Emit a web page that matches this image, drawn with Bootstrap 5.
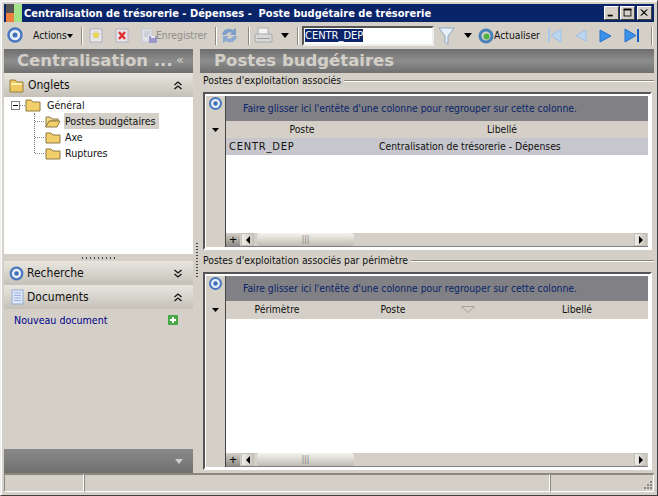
<!DOCTYPE html>
<html lang="fr"><head><meta charset="utf-8"><title>Centralisation</title>
<link href="https://cdn.jsdelivr.net/npm/bootstrap@5.3.0/dist/css/bootstrap.min.css" rel="stylesheet">
<style>
html,body{margin:0;width:658px;height:496px;overflow:hidden;background:#d4d0c8}
body,.ui{font:10.3px/13px "DejaVu Sans Condensed","DejaVu Sans",sans-serif;color:#111}
.win{width:658px;height:496px;background:#d4d0c8;border:1px solid;border-color:#eee #404040 #404040 #eee;box-shadow:inset 1px 1px 0 #fff;box-sizing:border-box;padding:3px}
.titlebar{height:18px;background:#0a246a;color:#fff;font-weight:700;font-size:11px;white-space:pre}
.appicon{width:20px;height:18px;flex:none}
.capbtn{width:15px;height:14px;background:#d4d0c8;border:1px solid;border-color:#fff #404040 #404040 #fff;margin-left:1px;flex:none;display:block}
.capx{margin-left:2px;margin-right:2px}
.toolbar{height:27px;white-space:nowrap}
.toolbar>*{flex:none}
.tsep{width:1px;height:18px;background:#8b887f;box-shadow:1px 0 0 #fff;flex:none}
.textbox{width:132px;height:20px;background:#fff;border:2px solid;border-color:#555 #eee #eee #555;padding:1px 0 0 1px;font-size:11px}
.sel{background:#0a246a;color:#fff}
.m0{margin-left:0}.mn1{margin-left:-1px}.m2{margin-left:2px}.m3{margin-left:3px}.m4{margin-left:4px}.m5{margin-left:5px}.m6{margin-left:6px}.m7{margin-left:7px}.m8{margin-left:8px}.m9{margin-left:9px}.m10{margin-left:10px}.m11{margin-left:11px}.m12{margin-left:12px}
.w-act{width:34px}.w-save{width:54px;color:#8f8c85}.w-upd{width:47px}
.mainrow{height:424px}
.leftp{width:189px;flex:none}
.rightp{width:454px;flex:none}
.hdr{height:24px;background:linear-gradient(#6f6f6f,#8d8d8d 50%,#6f6f6f);color:#d4d0c8;font:700 16.5px/24px "DejaVu Sans",sans-serif;white-space:nowrap;overflow:hidden}
.ht1{padding-left:13px}
.ht2{padding-left:14px}
.collapse-mark{font:400 13px/22px "DejaVu Sans",sans-serif;padding-right:9px}
.sect{height:24px;background:linear-gradient(#e9e6df,#c5c1b9);font-size:12px}
.sect span{padding-top:1px}
.chev{margin-right:11px;flex:none}
.tree{height:157px;background:#fff;padding:0 0 0 7px;font-size:10.6px}
.treerow{height:16px;white-space:nowrap}
.treerow svg{flex:none}
.treebr{margin-left:23px;border-left:1px dotted #777;height:40px}
.subhi{background:#d4d0c8;padding:0 3px 0 1px;margin-left:3px;line-height:16px}
.tl2{margin-left:4px}
.gripbar{height:7px}
.griplbl{width:34px;height:2px;background:repeating-linear-gradient(90deg,#444 0 1px,transparent 1px 4px)}
.docarea{padding:5px 0 0 10px}
.linkdoc{color:#00008b;font-size:10.6px}
.addic{margin:1px 15px 0 0;flex:none}
.footg{height:24px;background:linear-gradient(#8a8a8a,#6f6f6f)}
.footg .chev{margin-right:10px}
.grpwrap{width:7px;flex:none}
.vgrip{width:2px;height:35px;margin-top:194px;background:repeating-linear-gradient(#444 0 1px,transparent 1px 3px);flex:none}
.lbl{height:14px;margin-bottom:5px;padding-left:3px;white-space:nowrap}
.l2{margin-top:3px}
.lbl-line{height:1px;background:#8b887f;box-shadow:0 1px 0 #fff;margin-left:3px}
.gridbox{border:2px solid;border-color:#555 #fff #fff #555;margin:0 2px 0 3px;background:#fff;box-sizing:border-box}
.g1{height:158px}
.g2{height:198px}
.gridin{border:solid #fff;border-width:2px 2px 1px 1px;background:#fff}
.rail{width:20px;background:#d4d0c8;border-right:1px solid #444;flex:none}
.r1{margin-top:0}
.r2{margin-top:17px}
.gcol{min-width:0}
.groupbar{height:25px;background:#808085;color:#0a246a;padding:6px 0 0 17px;white-space:nowrap;flex:none}
.ghead{height:17px;background:#d4d0c8;white-space:nowrap;overflow:hidden;padding-top:2px;flex:none}
.gh2{height:18px}
.cell{text-align:center;flex:none}
.grow1{height:17px;background:#c7c6cc;padding-top:2px;white-space:nowrap;flex:none}
.c1{width:152px}.c2{width:248px}
.tc{padding-left:3px}.tc2{padding-left:1px}
.cdep{font-size:11px;letter-spacing:.8px}
.c21{width:102px}.c22{width:130px}.c23{width:204px}
.tri{width:17px;padding:3px 0 0 3px;flex:none;box-sizing:border-box}
.tri svg{display:block}
.gwhite{background:#fff;flex:1 1 auto}
.sbar{height:14px;background:#d4d0c8;border-bottom:1px solid #808080;flex:none;overflow:hidden}
.plusb{width:14px;background:linear-gradient(#d4d0c8,#8f8d87);font:400 13px/13px "Liberation Sans",sans-serif;text-align:center;color:#000;flex:none}
.arrowb{width:13px;background:linear-gradient(90deg,#f0eee9,#c8c5bd);border:1px solid #c0bdb5;flex:none;margin-left:1px;box-sizing:border-box}
.arrowb svg{display:block;margin:2px auto 0}
.arrowr{margin-left:0;margin-right:1px}
.thumb{width:97px;margin-left:3px;border-radius:3px;background:linear-gradient(#f4f3ef,#d8d5ce 55%,#bdbab2);flex:none;text-align:center;font-size:8px;line-height:13px;color:#777}
.status{height:19px;border-top:1px solid #8b887f;box-shadow:inset 0 1px 0 #fff}
.stcell{border:1px solid;border-color:#8b887f #fff #fff #8b887f;height:18px;margin-top:0}
.st1{width:80px}.st3{width:104px}
</style></head>
<body>
<div class="win ui d-flex flex-column">
 <div class="titlebar d-flex align-items-center">
  <svg class="appicon" viewBox="0 0 20 18"><rect width="20" height="18" fill="#0a246a"/><rect x="2" width="8" height="9" fill="#555"/><rect x="2" y="9" width="8" height="9" fill="#f08040"/><rect x="10" width="8" height="18" fill="#a4e488"/></svg>
  <span class="flex-grow-1">Centralisation de trésorerie - Dépenses -  Poste budgétaire de trésorerie</span>
  <svg class="capbtn" viewBox="0 0 15 14"><rect x="3" y="9" width="6" height="2" fill="#000"/></svg>
  <svg class="capbtn" viewBox="0 0 15 14"><rect x="3.500" y="2.500" width="8" height="8" fill="none" stroke="#000"/><rect x="3" y="2" width="9" height="2" fill="#000"/></svg>
  <svg class="capbtn capx" viewBox="0 0 15 14"><path d="M3 3l7 7M4 3l7 7M10 3l-7 7M11 3l-7 7" stroke="#000"/></svg>
 </div>
 <div class="toolbar d-flex align-items-center">
  <svg class="m3" width="17" height="17" viewBox="0 0 17 17"><circle cx="8" cy="8" r="6.500" fill="#e8eef8" stroke="#4a78c0" stroke-width="2.500"/><circle cx="8" cy="8" r="2.500" fill="#3f6fb8"/></svg>
  <span class="m9 w-act">Actions</span><svg width="6" height="4" viewBox="0 0 6 4"><path d="M0 0h6L3 4z"/></svg>
  <span class="tsep m8"></span>
  <svg class="m7" width="14" height="15" viewBox="0 0 14 15"><rect x="1" y="1" width="12" height="13" fill="#e8e6e8" stroke="#b0b0c0"/><path d="M7 3l1.200 2.400 2.600.3-1.900 1.800.5 2.600L7 8.900l-2.400 1.200.5-2.600-1.900-1.800 2.600-.3z" fill="#f2dc40" stroke="#c8b860" stroke-width=".5"/></svg>
  <svg class="m12" width="14" height="15" viewBox="0 0 14 15"><rect x="1" y="1" width="12" height="13" fill="#e8e6e8" stroke="#b0b0c0"/><path d="M4 4l6 7M10 4l-6 7" stroke="#e03030" stroke-width="2.400"/></svg>
  <svg class="m12" width="16" height="16" viewBox="0 0 16 16"><rect x="1" y="1" width="10" height="13" fill="#dfe2e8" stroke="#c4c8d0"/><path d="M3 4h6M3 6h6M3 8h4" stroke="#b8bcc8"/><rect x="8" y="8" width="8" height="7" fill="#9a98c8"/><rect x="10" y="8" width="4" height="2" fill="#e8e8f0"/></svg>
  <span class="mn1 w-save">Enregistrer</span>
  <span class="tsep m5"></span>
  <svg class="m5" width="17" height="17" viewBox="0 0 17 17"><path d="M1 8a7 7 0 0 1 11-5l3-2v7H9l2-2a4 4 0 0 0-6 2z" fill="#7f9fca"/><path d="M16 9a7 7 0 0 1-11 5l-3 2V9h6l-2 2a4 4 0 0 0 6-2z" fill="#8eaad0"/></svg>
  <span class="tsep m10"></span>
  <svg class="m5" width="19" height="17" viewBox="0 0 19 17"><rect x="4" y="1" width="10" height="7" fill="#f2f2f2" stroke="#b0b0b0"/><rect x="1" y="7" width="17" height="8" rx="1" fill="#d8d8d8" stroke="#a8a8a8"/><rect x="3" y="11" width="13" height="1" fill="#999"/></svg>
  <svg class="m8" width="8" height="5" viewBox="0 0 8 5"><path d="M0 0h8L4 5z"/></svg>
  <span class="tsep m8"></span>
  <div class="textbox m4"><span class="sel">CENTR_DEP</span></div>
  <svg class="m4" width="17" height="20" viewBox="0 0 17 20"><path d="M1 2h15L10 10v8l-3-2v-6z" fill="#e8f0f8" stroke="#8fa8c4"/></svg>
  <svg class="m9" width="8" height="5" viewBox="0 0 8 5"><path d="M0 0h8L4 5z"/></svg>
  <svg class="m6" width="16" height="16" viewBox="0 0 16 16"><circle cx="8" cy="8" r="6" fill="none" stroke="#4a80b8" stroke-width="3"/><circle cx="8.500" cy="8.500" r="3" fill="#50b040"/></svg>
  <span class="w-upd">Actualiser</span>
  <svg class="m6" width="16" height="15" viewBox="0 0 16 15"><rect x="1" y="1" width="2" height="13" fill="#a8c8ec"/><path d="M14 1v13L4 7.500z" fill="#bcd6f2" stroke="#a0c0e4"/></svg>
  <svg class="m11" width="13" height="13" viewBox="0 0 13 13"><path d="M12 1v11L2 6.500z" fill="#bcd6f2" stroke="#a0c0e4"/></svg>
  <svg class="m12" width="13" height="14" viewBox="0 0 13 14"><path d="M1 1v12L12 7z" fill="#3a92ec" stroke="#2a70c8"/></svg>
  <svg class="m12" width="16" height="15" viewBox="0 0 16 15"><path d="M1 1v13L12 7.500z" fill="#3a92ec" stroke="#2a70c8"/><rect x="13" y="1" width="2" height="13" fill="#1a60c0"/></svg>
  <span class="tsep m11"></span>
 </div>
 <div class="mainrow d-flex">
  <div class="leftp d-flex flex-column">
   <div class="hdr d-flex justify-content-between"><span class="ht1">Centralisation ...</span><span class="collapse-mark">«</span></div>
   <div class="sect d-flex align-items-center"><svg class="m5" width="15" height="15" viewBox="0 0 15 15"><path d="M1 2h5l2 2h6v10H1z" fill="#f0c860" stroke="#9a8040"/><rect x="2" y="5" width="11" height="2" fill="#fff0b0"/></svg><span class="m4 flex-grow-1">Onglets</span><svg class="chev" width="8" height="9" viewBox="0 0 8 9"><path d="M.5 4L4 1l3.500 3M.5 8L4 5l3.500 3" fill="none" stroke="#111" stroke-width="1.300"/></svg></div>
   <div class="tree">
    <div class="treerow d-flex align-items-center">
     <svg width="9" height="9" viewBox="0 0 9 9"><rect x=".5" y=".5" width="8" height="8" fill="#fff" stroke="#808080"/><path d="M2 4.500h5" stroke="#000"/></svg>
     <svg width="21" height="13" viewBox="0 0 21 13"><path d="M0 6.500h6" stroke="#888" stroke-dasharray="1 1"/><path d="M6 1h5l2 2h7v9H6z" fill="#f2cf6a" stroke="#8d7a40"/></svg>
     <span class="m6">Général</span>
    </div>
    <div class="treebr">
     <div class="treerow d-flex align-items-center"><svg width="10" height="1" viewBox="0 0 10 1"><path d="M0 .5h10" stroke="#888" stroke-dasharray="1 1"/></svg><svg width="16" height="13" viewBox="0 0 16 13"><path d="M1 2h4l2 2h6v2H5l-4 6z" fill="#f0d890" stroke="#8d7a40"/><path d="M4 6h11l-3 6H1z" fill="#f2cf6a" stroke="#8d7a40"/></svg><span class="subhi">Postes budgétaires</span></div>
     <div class="treerow d-flex align-items-center"><svg width="10" height="1" viewBox="0 0 10 1"><path d="M0 .5h10" stroke="#888" stroke-dasharray="1 1"/></svg><svg width="16" height="13" viewBox="0 0 16 13"><path d="M1 2h5l2 2h7v8H1z" fill="#f2cf6a" stroke="#8d7a40"/></svg><span class="tl2">Axe</span></div>
     <div class="treerow d-flex align-items-center"><svg width="10" height="1" viewBox="0 0 10 1"><path d="M0 .5h10" stroke="#888" stroke-dasharray="1 1"/></svg><svg width="16" height="13" viewBox="0 0 16 13"><path d="M1 2h5l2 2h7v8H1z" fill="#f2cf6a" stroke="#8d7a40"/></svg><span class="tl2">Ruptures</span></div>
    </div>
   </div>
   <div class="gripbar d-flex justify-content-center align-items-center"><span class="griplbl"></span></div>
   <div class="sect d-flex align-items-center"><svg class="m5" width="15" height="15" viewBox="0 0 15 15"><circle cx="7.500" cy="7.500" r="5.800" fill="#e8eef8" stroke="#4a78c0" stroke-width="2.200"/><circle cx="7.500" cy="7.500" r="2.300" fill="#3f6fb8"/></svg><span class="m3 flex-grow-1">Recherche</span><svg class="chev" width="8" height="9" viewBox="0 0 8 9"><path d="M.5 1L4 4l3.500-3M.5 5L4 8l3.500-3" fill="none" stroke="#111" stroke-width="1.300"/></svg></div>
   <div class="sect d-flex align-items-center"><svg class="m6" width="15" height="16" viewBox="0 0 15 16"><rect x="2" y="1" width="11" height="14" fill="#dfe8f8" stroke="#98acd0"/><path d="M4 4h7M4 6.500h7M4 9h7M4 11.500h7" stroke="#9ab0dc"/></svg><span class="m2 flex-grow-1">Documents</span><svg class="chev" width="8" height="9" viewBox="0 0 8 9"><path d="M.5 4L4 1l3.500 3M.5 8L4 5l3.500 3" fill="none" stroke="#111" stroke-width="1.300"/></svg></div>
   <div class="docarea flex-grow-1 d-flex"><span class="linkdoc flex-grow-1">Nouveau document</span><svg class="addic" width="10" height="10" viewBox="0 0 10 10"><rect width="10" height="10" fill="#48a848"/><path d="M5 2v6M2 5h6" stroke="#fff" stroke-width="2"/></svg></div>
   <div class="footg d-flex justify-content-end align-items-center"><svg class="chev" width="8" height="5" viewBox="0 0 8 5"><path d="M0 0h8L4 5z" fill="#cfcfcf"/></svg></div>
  </div>
  <div class="grpwrap d-flex align-items-start justify-content-center"><span class="vgrip"></span></div>
  <div class="rightp d-flex flex-column">
   <div class="hdr"><span class="ht2">Postes budgétaires</span></div>
   <div class="d-flex align-items-center lbl"><span>Postes d'exploitation associés</span><span class="lbl-line flex-grow-1"></span></div>
   <div class="gridbox d-flex g1 flex-column"><div class="gridin d-flex flex-grow-1">
    <div class="rail d-flex flex-column align-items-center">
     <svg class="r1" width="15" height="15" viewBox="0 0 15 15"><circle cx="7.500" cy="7.500" r="5.500" fill="#e8eef8" stroke="#4a78c0" stroke-width="2"/><circle cx="7.500" cy="7.500" r="2.200" fill="#3f6fb8"/></svg>
     <svg class="r2" width="7" height="4" viewBox="0 0 7 4"><path d="M0 0h7L3.500 4z"/></svg>
    </div>
    <div class="flex-grow-1 d-flex flex-column gcol">
     <div class="groupbar">Faire glisser ici l'entête d'une colonne pour regrouper sur cette colonne.</div>
     <div class="ghead d-flex"><div class="cell c1">Poste</div><div class="cell c2">Libellé</div></div>
     <div class="grow1 d-flex"><div class="c1 tc"><span class="cdep">CENTR_DEP</span></div><div class="tc2">Centralisation de trésorerie - Dépenses</div></div>
     <div class="gwhite"></div>
     <div class="sbar d-flex"><div class="plusb">+</div><div class="arrowb"><svg width="4" height="8" viewBox="0 0 4 8"><path d="M4 0v8L0 4z"/></svg></div><div class="thumb">|||</div><div class="flex-grow-1"></div><div class="arrowb arrowr"><svg width="4" height="8" viewBox="0 0 4 8"><path d="M0 0v8l4-4z"/></svg></div></div>
    </div>
   </div></div>
   <div class="d-flex align-items-center lbl l2"><span>Postes d'exploitation associés par périmètre</span><span class="lbl-line flex-grow-1"></span></div>
   <div class="gridbox d-flex g2 flex-column"><div class="gridin d-flex flex-grow-1">
    <div class="rail d-flex flex-column align-items-center">
     <svg class="r1" width="15" height="15" viewBox="0 0 15 15"><circle cx="7.500" cy="7.500" r="5.500" fill="#e8eef8" stroke="#4a78c0" stroke-width="2"/><circle cx="7.500" cy="7.500" r="2.200" fill="#3f6fb8"/></svg>
     <svg class="r2" width="7" height="4" viewBox="0 0 7 4"><path d="M0 0h7L3.500 4z"/></svg>
    </div>
    <div class="flex-grow-1 d-flex flex-column gcol">
     <div class="groupbar">Faire glisser ici l'entête d'une colonne pour regrouper sur cette colonne.</div>
     <div class="ghead gh2 d-flex"><div class="cell c21">Périmètre</div><div class="cell c22">Poste</div><div class="tri"><svg width="14" height="7" viewBox="0 0 14 7"><path d="M.5.500h13L7 6.500z" fill="#d4d0c8" stroke="#a6a39b"/></svg></div><div class="cell c23">Libellé</div></div>
     <div class="gwhite"></div>
     <div class="sbar d-flex"><div class="plusb">+</div><div class="arrowb"><svg width="4" height="8" viewBox="0 0 4 8"><path d="M4 0v8L0 4z"/></svg></div><div class="thumb">|||</div><div class="flex-grow-1"></div><div class="arrowb arrowr"><svg width="4" height="8" viewBox="0 0 4 8"><path d="M0 0v8l4-4z"/></svg></div></div>
    </div>
   </div></div>
  </div>
 </div>
 <div class="status d-flex">
  <div class="stcell st1"></div><div class="stcell flex-grow-1"></div><div class="stcell st3 d-flex justify-content-end align-items-end"><svg width="11" height="11" viewBox="0 0 11 11"><path d="M8 1h2v2H8zM5 4h2v2H5zM8 4h2v2H8zM2 7h2v2H2zM5 7h2v2H5zM8 7h2v2H8z" fill="#888"/></svg></div>
 </div>
</div>
</body></html>
